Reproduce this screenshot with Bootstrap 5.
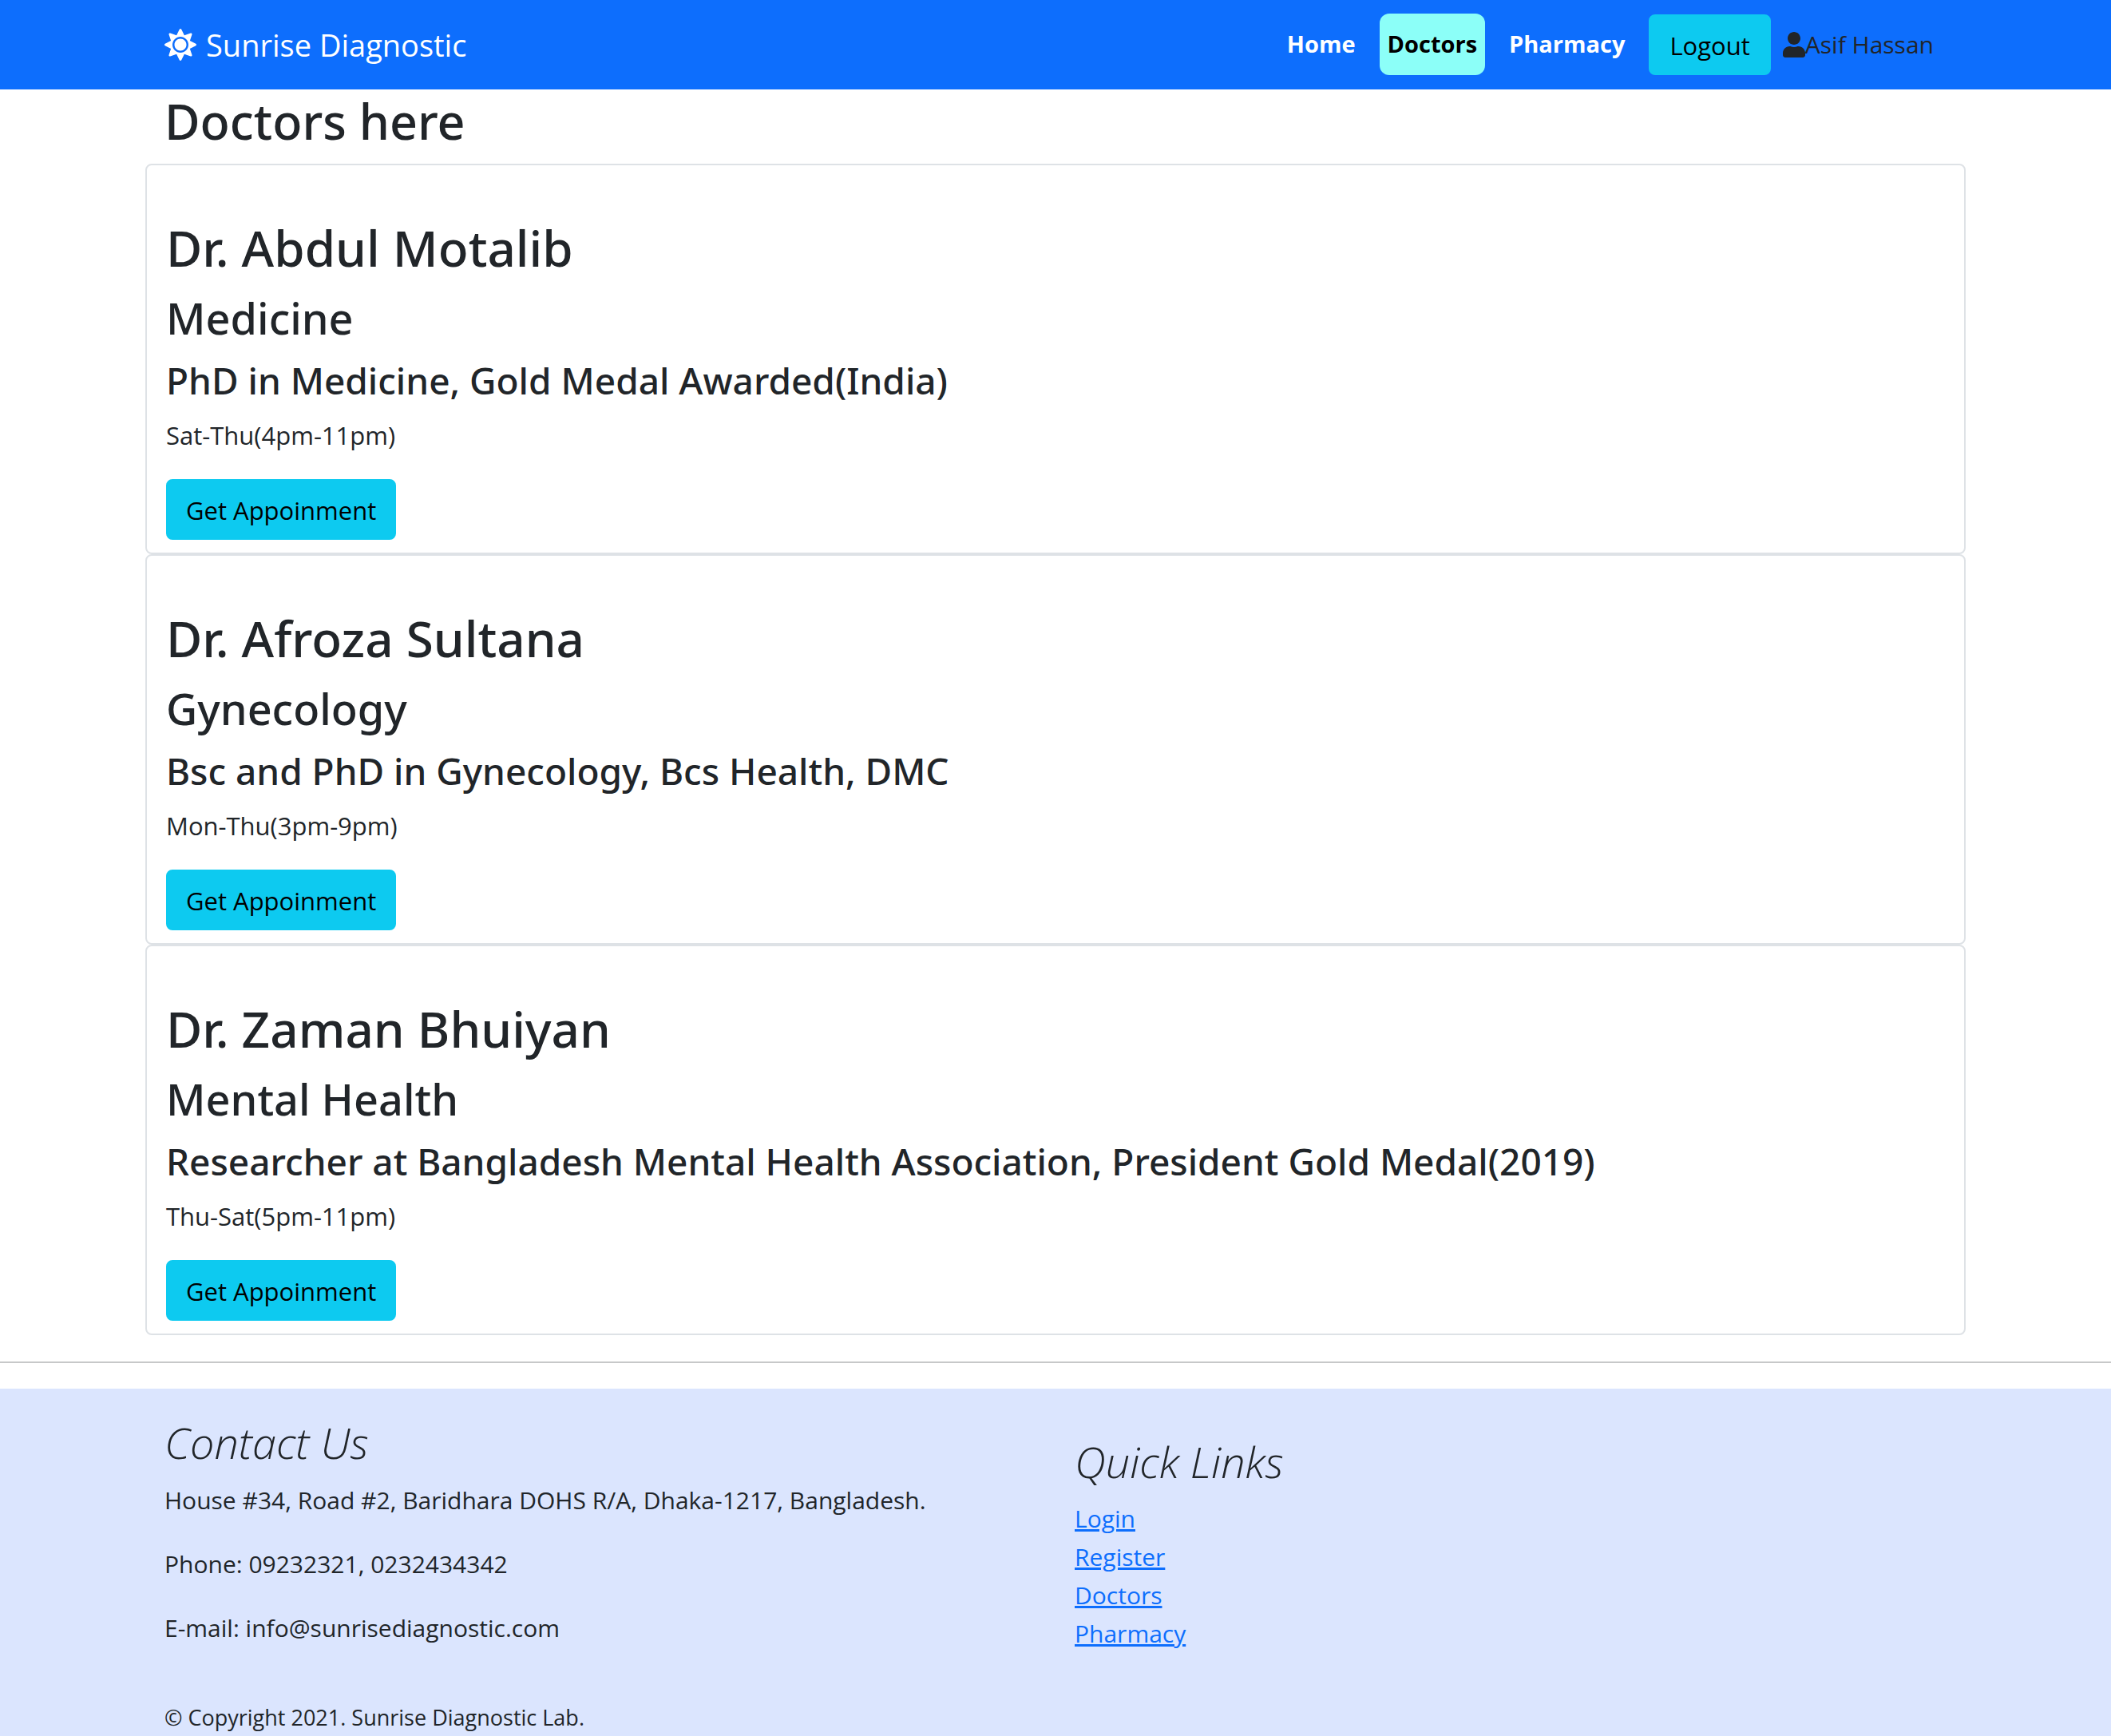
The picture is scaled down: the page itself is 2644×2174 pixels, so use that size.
<!DOCTYPE html>
<html lang="en">
<head>
<meta charset="utf-8">
<meta name="viewport" content="width=device-width, initial-scale=1">
<title>Sunrise Diagnostic</title>
<link href="https://cdn.jsdelivr.net/npm/bootstrap@5.3.0/dist/css/bootstrap.min.css" rel="stylesheet">
<style>
  body { font-family: "Open Sans", "Noto Sans", sans-serif; font-size: 30px; line-height: 50px; color: #212529; overflow-x: hidden; }
  .page-width { width: 100%; max-width: 2280px; margin-inline: auto; }
  .gutter { padding-inline: 24px; }

  .site-nav { padding: 17px 0 18px; background: #0d6efd; }
  .site-brand { gap: 12px; font-size: 38px; line-height: 60px; }
  .site-brand svg { width: 40px; height: 40px; }
  .menu-list { gap: 20px; }
  .menu-link { display: block; padding: 14px 10px 16px; border-radius: 12px; color: #fff; font-size: 29px; font-weight: 700; line-height: 47px; text-decoration: none; }
  .menu-link.active { background: #8cfff8; color: #000; }
  .user-name { margin: 0 16px 0 15px; line-height: 50px; }
  .user-name svg { width: 28px; height: 32px; }

  .btn-cyan { --bs-btn-padding-x: 24px; --bs-btn-font-size: 31px; --bs-btn-line-height: 48px; --bs-btn-border-width: 2px; --bs-btn-border-radius: 8px; padding-top: 13px; padding-bottom: 11px; }

  h1, h2, h3, h4 { font-family: "Noto Sans", "Open Sans", sans-serif; font-weight: 500; }
  .page-title { font-size: 61px; line-height: 80px; margin-bottom: 13px; }
  .doctor-card { --bs-card-border-width: 2px; --bs-card-border-color: #dee2e6; --bs-card-border-radius: 8px; }
  .doctor-card .card-body { padding: 63px 24px 16px; }
  .doctor-card .btn-cyan { --bs-btn-padding-x: 23px; }
  .doctor-name { font-size: 62px; line-height: 80px; margin-bottom: 13px; }
  .doctor-field { font-size: 54px; line-height: 70px; margin-bottom: 13px; }
  .doctor-degree { font-size: 46px; line-height: 60px; margin-bottom: 14px; }
  .doctor-hours { font-size: 31px; margin-bottom: 30px; }

  .divider { margin: 33px 0 32px; border-top: 2px solid #212529; opacity: .25; }
  .site-footer { background: #dbe5fe; padding-top: 32px; }
  .footer-title { font-family: "Open Sans", sans-serif; font-size: 54px; font-style: italic; font-weight: 300; line-height: 70px; margin-bottom: 13px; }
  .contact-line { margin-bottom: 30px; }
  .quick-links { padding: 24px 24px 0; }
  .quick-links li { line-height: 48px; }
  .quick-links a { color: #0d6efd; text-decoration-thickness: 3px; }
  .copyright { font-size: 27px; line-height: 42px; padding-top: 36px; margin: 0; }
</style>
</head>
<body class="d-flex flex-column min-vh-100">
<nav class="navbar navbar-expand site-nav">
  <div class="page-width gutter d-flex align-items-center justify-content-between">
    <a class="site-brand d-flex align-items-center text-white text-decoration-none" href="#">
      <svg viewBox="0 0 512 512" fill="currentColor" aria-hidden="true"><path d="M256 160c-52.9 0-96 43.1-96 96s43.1 96 96 96 96-43.1 96-96-43.1-96-96-96zm246.4 80.5l-94.7-47.3 33.5-100.4c4.5-13.6-8.4-26.5-21.9-21.9l-100.4 33.5-47.4-94.8c-6.4-12.8-24.6-12.8-31 0l-47.3 94.7L92.7 70.8c-13.6-4.5-26.5 8.4-21.9 21.9l33.5 100.4-94.7 47.4c-12.8 6.4-12.8 24.6 0 31l94.7 47.3-33.5 100.5c-4.5 13.6 8.4 26.5 21.9 21.9l100.4-33.5 47.3 94.7c6.4 12.8 24.6 12.8 31 0l47.3-94.7 100.4 33.5c13.6 4.5 26.5-8.4 21.9-21.9l-33.5-100.4 94.7-47.3c13-6.5 13-24.7.2-31.1zm-155.9 106c-49.9 49.9-131.1 49.9-181 0-49.9-49.9-49.9-131.1 0-181 49.9-49.9 131.1-49.9 181 0 49.9 49.9 49.9 131.1 0 181z"/></svg>
      <span>Sunrise Diagnostic</span>
    </a>
    <div class="d-flex align-items-center">
      <ul class="menu-list list-unstyled d-flex align-items-center mb-0">
        <li><a class="menu-link" href="#">Home</a></li>
        <li><a class="menu-link active" aria-current="page" href="#">Doctors</a></li>
        <li><a class="menu-link" href="#">Pharmacy</a></li>
        <li><button type="button" class="btn btn-info btn-cyan d-block">Logout</button></li>
      </ul>
      <div class="user-name d-flex align-items-center">
        <svg viewBox="0 0 448 512" fill="currentColor" aria-hidden="true"><path d="M224 256c70.7 0 128-57.3 128-128S294.7 0 224 0 96 57.3 96 128s57.3 128 128 128zm89.6 32h-16.7c-22.2 10.2-46.9 16-72.9 16s-50.6-5.8-72.9-16h-16.7C60.2 288 0 348.2 0 422.4V464c0 26.5 21.5 48 48 48h352c26.5 0 48-21.5 48-48v-41.6c0-74.2-60.2-134.4-134.4-134.4z"/></svg>
        <span>Asif Hassan</span>
      </div>
    </div>
  </div>
</nav>

<main class="page-width">
  <h1 class="page-title gutter">Doctors here</h1>
  <article class="card doctor-card">
    <div class="card-body">
      <h2 class="doctor-name">Dr. Abdul Motalib</h2>
      <h3 class="doctor-field">Medicine</h3>
      <h4 class="doctor-degree">PhD in Medicine, Gold Medal Awarded(India)</h4>
      <p class="doctor-hours">Sat-Thu(4pm-11pm)</p>
      <button type="button" class="btn btn-info btn-cyan d-block">Get Appoinment</button>
    </div>
  </article>
  <article class="card doctor-card">
    <div class="card-body">
      <h2 class="doctor-name">Dr. Afroza Sultana</h2>
      <h3 class="doctor-field">Gynecology</h3>
      <h4 class="doctor-degree">Bsc and PhD in Gynecology, Bcs Health, DMC</h4>
      <p class="doctor-hours">Mon-Thu(3pm-9pm)</p>
      <button type="button" class="btn btn-info btn-cyan d-block">Get Appoinment</button>
    </div>
  </article>
  <article class="card doctor-card">
    <div class="card-body">
      <h2 class="doctor-name">Dr. Zaman Bhuiyan</h2>
      <h3 class="doctor-field">Mental Health</h3>
      <h4 class="doctor-degree">Researcher at Bangladesh Mental Health Association, President Gold Medal(2019)</h4>
      <p class="doctor-hours">Thu-Sat(5pm-11pm)</p>
      <button type="button" class="btn btn-info btn-cyan d-block">Get Appoinment</button>
    </div>
  </article>
</main>

<hr class="divider">

<footer class="site-footer flex-grow-1">
  <div class="page-width">
    <div class="row g-0">
      <div class="col-6 gutter">
        <h3 class="footer-title">Contact Us</h3>
        <p class="contact-line">House #34, Road #2, Baridhara DOHS R/A, Dhaka-1217, Bangladesh.</p>
        <p class="contact-line">Phone: 09232321, 0232434342</p>
        <p class="contact-line">E-mail: info@sunrisediagnostic.com</p>
      </div>
      <div class="col-6 quick-links">
        <h3 class="footer-title">Quick Links</h3>
        <ul class="list-unstyled mb-0">
          <li><a href="#">Login</a></li>
          <li><a href="#">Register</a></li>
          <li><a href="#">Doctors</a></li>
          <li><a href="#">Pharmacy</a></li>
        </ul>
      </div>
    </div>
    <p class="copyright gutter">© Copyright 2021. Sunrise Diagnostic Lab.</p>
  </div>
</footer>
<script src="https://cdn.jsdelivr.net/npm/bootstrap@5.3.0/dist/js/bootstrap.bundle.min.js"></script>
</body>
</html>
